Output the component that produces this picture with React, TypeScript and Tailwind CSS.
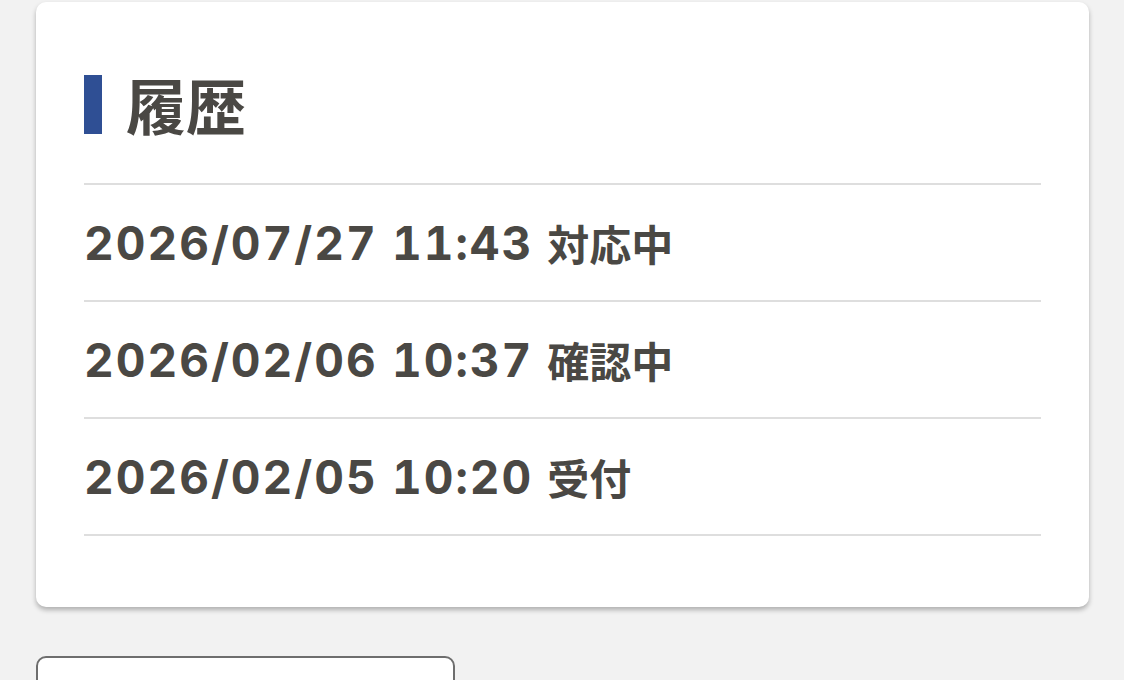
const rows = [
  { date: '2026/07/27 11:43', status: '対応中' },
  { date: '2026/02/06 10:37', status: '確認中' },
  { date: '2026/02/05 10:20', status: '受付' },
]

export default function App() {
  return (
    <div className="min-h-screen overflow-hidden bg-[#f2f2f2] font-['Inter','Noto_Sans_CJK_JP',sans-serif] text-[#4a4844]">
      <div className="ml-[36px] mt-[2px] w-[1053px] rounded-[10px] bg-white px-[48px] pb-[71px] shadow-[0_3px_5px_rgba(0,0,0,0.28)]">
        <div className="flex items-center pb-[49px] pt-[72px]">
          <span className="h-[59px] w-[18px] bg-[#2f4f94]" />
          <h2 className="ml-[24px] font-['Noto_Sans_CJK_JP',sans-serif] text-[60px] font-bold leading-none">履歴</h2>
        </div>
        <ul className="border-t-2 border-[#dedede]">
          {rows.map((row) => (
            <li key={row.date} className="flex h-[117px] items-center border-b-2 border-[#dedede] font-bold">
              <span className="text-[46px] leading-none tabular-nums tracking-[2px]">{row.date}</span>
              <span className="ml-[14px] font-['Noto_Sans_CJK_JP',sans-serif] text-[42px] leading-none">{row.status}</span>
            </li>
          ))}
        </ul>
      </div>
      <div className="ml-[36px] mt-[49px] h-[80px] w-[419px] rounded-[10px] border-2 border-[#6e6e6e] bg-white" />
    </div>
  )
}
